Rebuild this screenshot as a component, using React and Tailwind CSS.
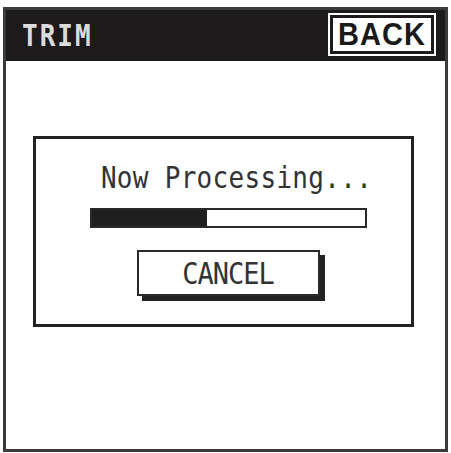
import React from 'react';

const mono = { fontFamily: '"DejaVu Sans Mono", "Liberation Mono", monospace' };

const App = () => {
  const progress = 42;

  return (
    <div className="w-[451px] h-[453px] bg-white pt-[7px] pl-[3px]">
      <div className="w-[445px] h-[445px] border-[3px] border-[#3a3a3a] flex flex-col bg-white">
        {/* header */}
        <div className="h-[51px] bg-[#1c1a1a] flex items-center justify-between pl-[16px] pr-[9px]">
          <span
            className="text-[#dcdcdc] text-[26px] tracking-[2px] font-semibold scale-y-115 leading-none"
            style={mono}
          >
            TRIM
          </span>
          <div className="border-[2px] border-white p-[2px] bg-[#1c1a1a] -mt-[2px]">
            <div className="bg-white border border-[#1c1a1a] h-[35px] w-[100px] flex items-center justify-center">
              <span
                className="text-[#1a1a1a] text-[29px] font-bold leading-none tracking-[1px] scale-y-110"
                style={{ fontFamily: '"Liberation Sans", Arial, sans-serif' }}
              >
                BACK
              </span>
            </div>
          </div>
        </div>

        {/* dialog */}
        <div className="ml-[27px] mt-[75px] w-[381px] h-[191px] border-[3px] border-[#222] flex flex-col items-center pl-[10px]">
          <div
            className="mt-[26px] text-[26px] leading-none text-[#333] scale-y-115 ml-[16px] tracking-[0.3px]"
            style={mono}
          >
            Now Processing...
          </div>
          <div className="mt-[17px] w-[277px] h-[20px] border-[2px] border-[#2a2a2a] bg-white flex">
            <div className="h-full bg-[#1f1f1f]" style={{ width: `${progress}%` }} />
          </div>
          <div className="mt-[22px] ml-[4px] relative w-[188px] h-[51px]">
            <div className="absolute left-[5px] top-[5px] w-[183px] h-[46px] bg-[#222]" />
            <div className="absolute left-0 top-0 w-[183px] h-[46px] border-[2px] border-[#2a2a2a] bg-white flex items-center justify-center">
              <span
                className="text-[27px] leading-none text-[#333] scale-y-110 tracking-[-1px]"
                style={mono}
              >
                CANCEL
              </span>
            </div>
          </div>
        </div>
      </div>
    </div>
  );
};

export default App;
